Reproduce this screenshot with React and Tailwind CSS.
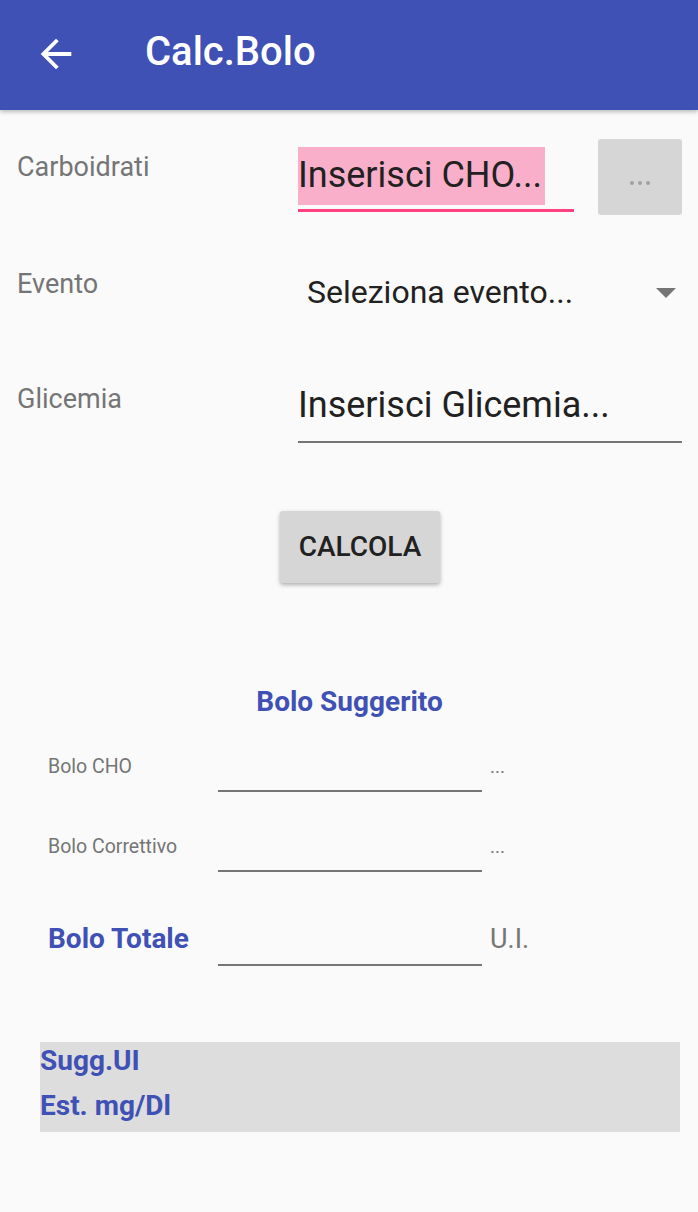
const BLUE = "text-[#3F51B5]";

function BoloRow({ label, unit, bold, className }) {
  return (
    <div className={`flex items-start ${className}`}>
      <div
        className={
          bold
            ? `w-[170px] text-[28px] leading-[32px] font-bold ${BLUE}`
            : "w-[170px] text-[19.5px] leading-[24px] text-[#757575]"
        }
      >
        {label}
      </div>
      <div
        className={`w-[264px] border-b-2 border-[#757575] ${
          bold ? "h-[43px]" : "h-[37px]"
        }`}
      />
      <div
        className={
          bold
            ? "ml-[8px] text-[27px] leading-[32px] text-[#757575]"
            : "ml-[8px] text-[19px] leading-[24px] text-[#757575]"
        }
      >
        {unit}
      </div>
    </div>
  );
}

export default function App() {
  return (
    <div
      className="min-h-[1212px] w-[698px] bg-[#FAFAFA]"
      style={{ fontFamily: "Roboto, 'Noto Sans', sans-serif" }}
    >
      {/* toolbar */}
      <div className="flex h-[110px] items-start bg-[#3F51B5] pl-[33px] pt-[28px] shadow-[0_2px_4px_rgba(0,0,0,0.25)]">
        <svg viewBox="0 0 24 24" className="mt-[3px] h-[46px] w-[46px] fill-white">
          <path d="M20 11H7.83l5.59-5.59L12 4l-8 8 8 8 1.41-1.41L7.83 13H20v-2z" />
        </svg>
        <div className="ml-[66px] text-[40px] font-medium leading-[48px] text-white">
          Calc.Bolo
        </div>
      </div>

      <div className="px-[16px] pl-[17px]">
        {/* Carboidrati */}
        <div className="mt-[29px] flex h-[76px] items-start">
          <div className="mt-[12px] w-[281px] text-[27px] leading-[32px] text-[#757575]">
            Carboidrati
          </div>
          <div className="flex w-[276px] flex-col pt-[8px]">
            <div>
              <span className="inline-block h-[58px] bg-[#F9AFC9] pr-[3px] text-[36px] leading-[56px] text-[#212121]">
                Inserisci CHO...
              </span>
            </div>
            <div className="mt-[4px] h-[3px] bg-[#FF4081]" />
          </div>
          <button className="ml-[24px] flex h-[76px] w-[84px] items-center justify-center gap-[4px] rounded-[3px] bg-[#D6D6D6] pt-[12px]">
            <span className="h-[4px] w-[4px] rounded-full bg-[#A0A0A0]" />
            <span className="h-[4px] w-[4px] rounded-full bg-[#A0A0A0]" />
            <span className="h-[4px] w-[4px] rounded-full bg-[#A0A0A0]" />
          </button>
        </div>

        {/* Evento */}
        <div className="mt-[53px] flex items-start">
          <div className="w-[281px] text-[27px] leading-[32px] text-[#757575]">Evento</div>
          <div className="mt-[4px] flex flex-1 items-start">
            <div className="ml-[9px] flex-1 text-[32px] leading-[40px] text-[#212121]">
              Seleziona evento...
            </div>
            <svg viewBox="0 0 20 10" className="mr-[6px] mt-[16px] h-[10px] w-[20px] fill-[#757575]">
              <path d="M0 0h20L10 10z" />
            </svg>
          </div>
        </div>

        {/* Glicemia */}
        <div className="mt-[71px] flex items-start">
          <div className="w-[281px] text-[27px] leading-[32px] text-[#757575]">Glicemia</div>
          <div className="flex flex-1 flex-col">
            <div className="text-[36px] leading-[44px] text-[#212121]">Inserisci Glicemia...</div>
            <div className="mt-[14px] h-[2px] bg-[#757575]" />
          </div>
        </div>

        {/* Calcola */}
        <button className="ml-[263px] mt-[68px] flex h-[72px] w-[160px] items-center justify-center rounded-[3px] bg-[#D6D6D6] text-[28px] font-medium text-[#212121] shadow-[0_2px_4px_rgba(0,0,0,0.3)]">
          CALCOLA
        </button>

        {/* Bolo suggerito */}
        <div className={`mt-[103px] text-center text-[28px] font-bold leading-[32px] ${BLUE}`}>
          Bolo Suggerito
        </div>

        <div className="pl-[31px]">
          <BoloRow className="mt-[37px]" label="Bolo CHO" unit="..." />
          <BoloRow className="mt-[43px]" label="Bolo Correttivo" unit="..." />
          <BoloRow className="mt-[51px]" label="Bolo Totale" unit="U.I." bold />
        </div>

        <div className={`ml-[23px] mt-[76px] w-[640px] bg-[#DDDDDD] text-[28px] font-bold ${BLUE}`}>
          <div className="leading-[38px]">Sugg.UI</div>
          <div className="leading-[52px]">Est. mg/Dl</div>
        </div>
      </div>
    </div>
  );
}
